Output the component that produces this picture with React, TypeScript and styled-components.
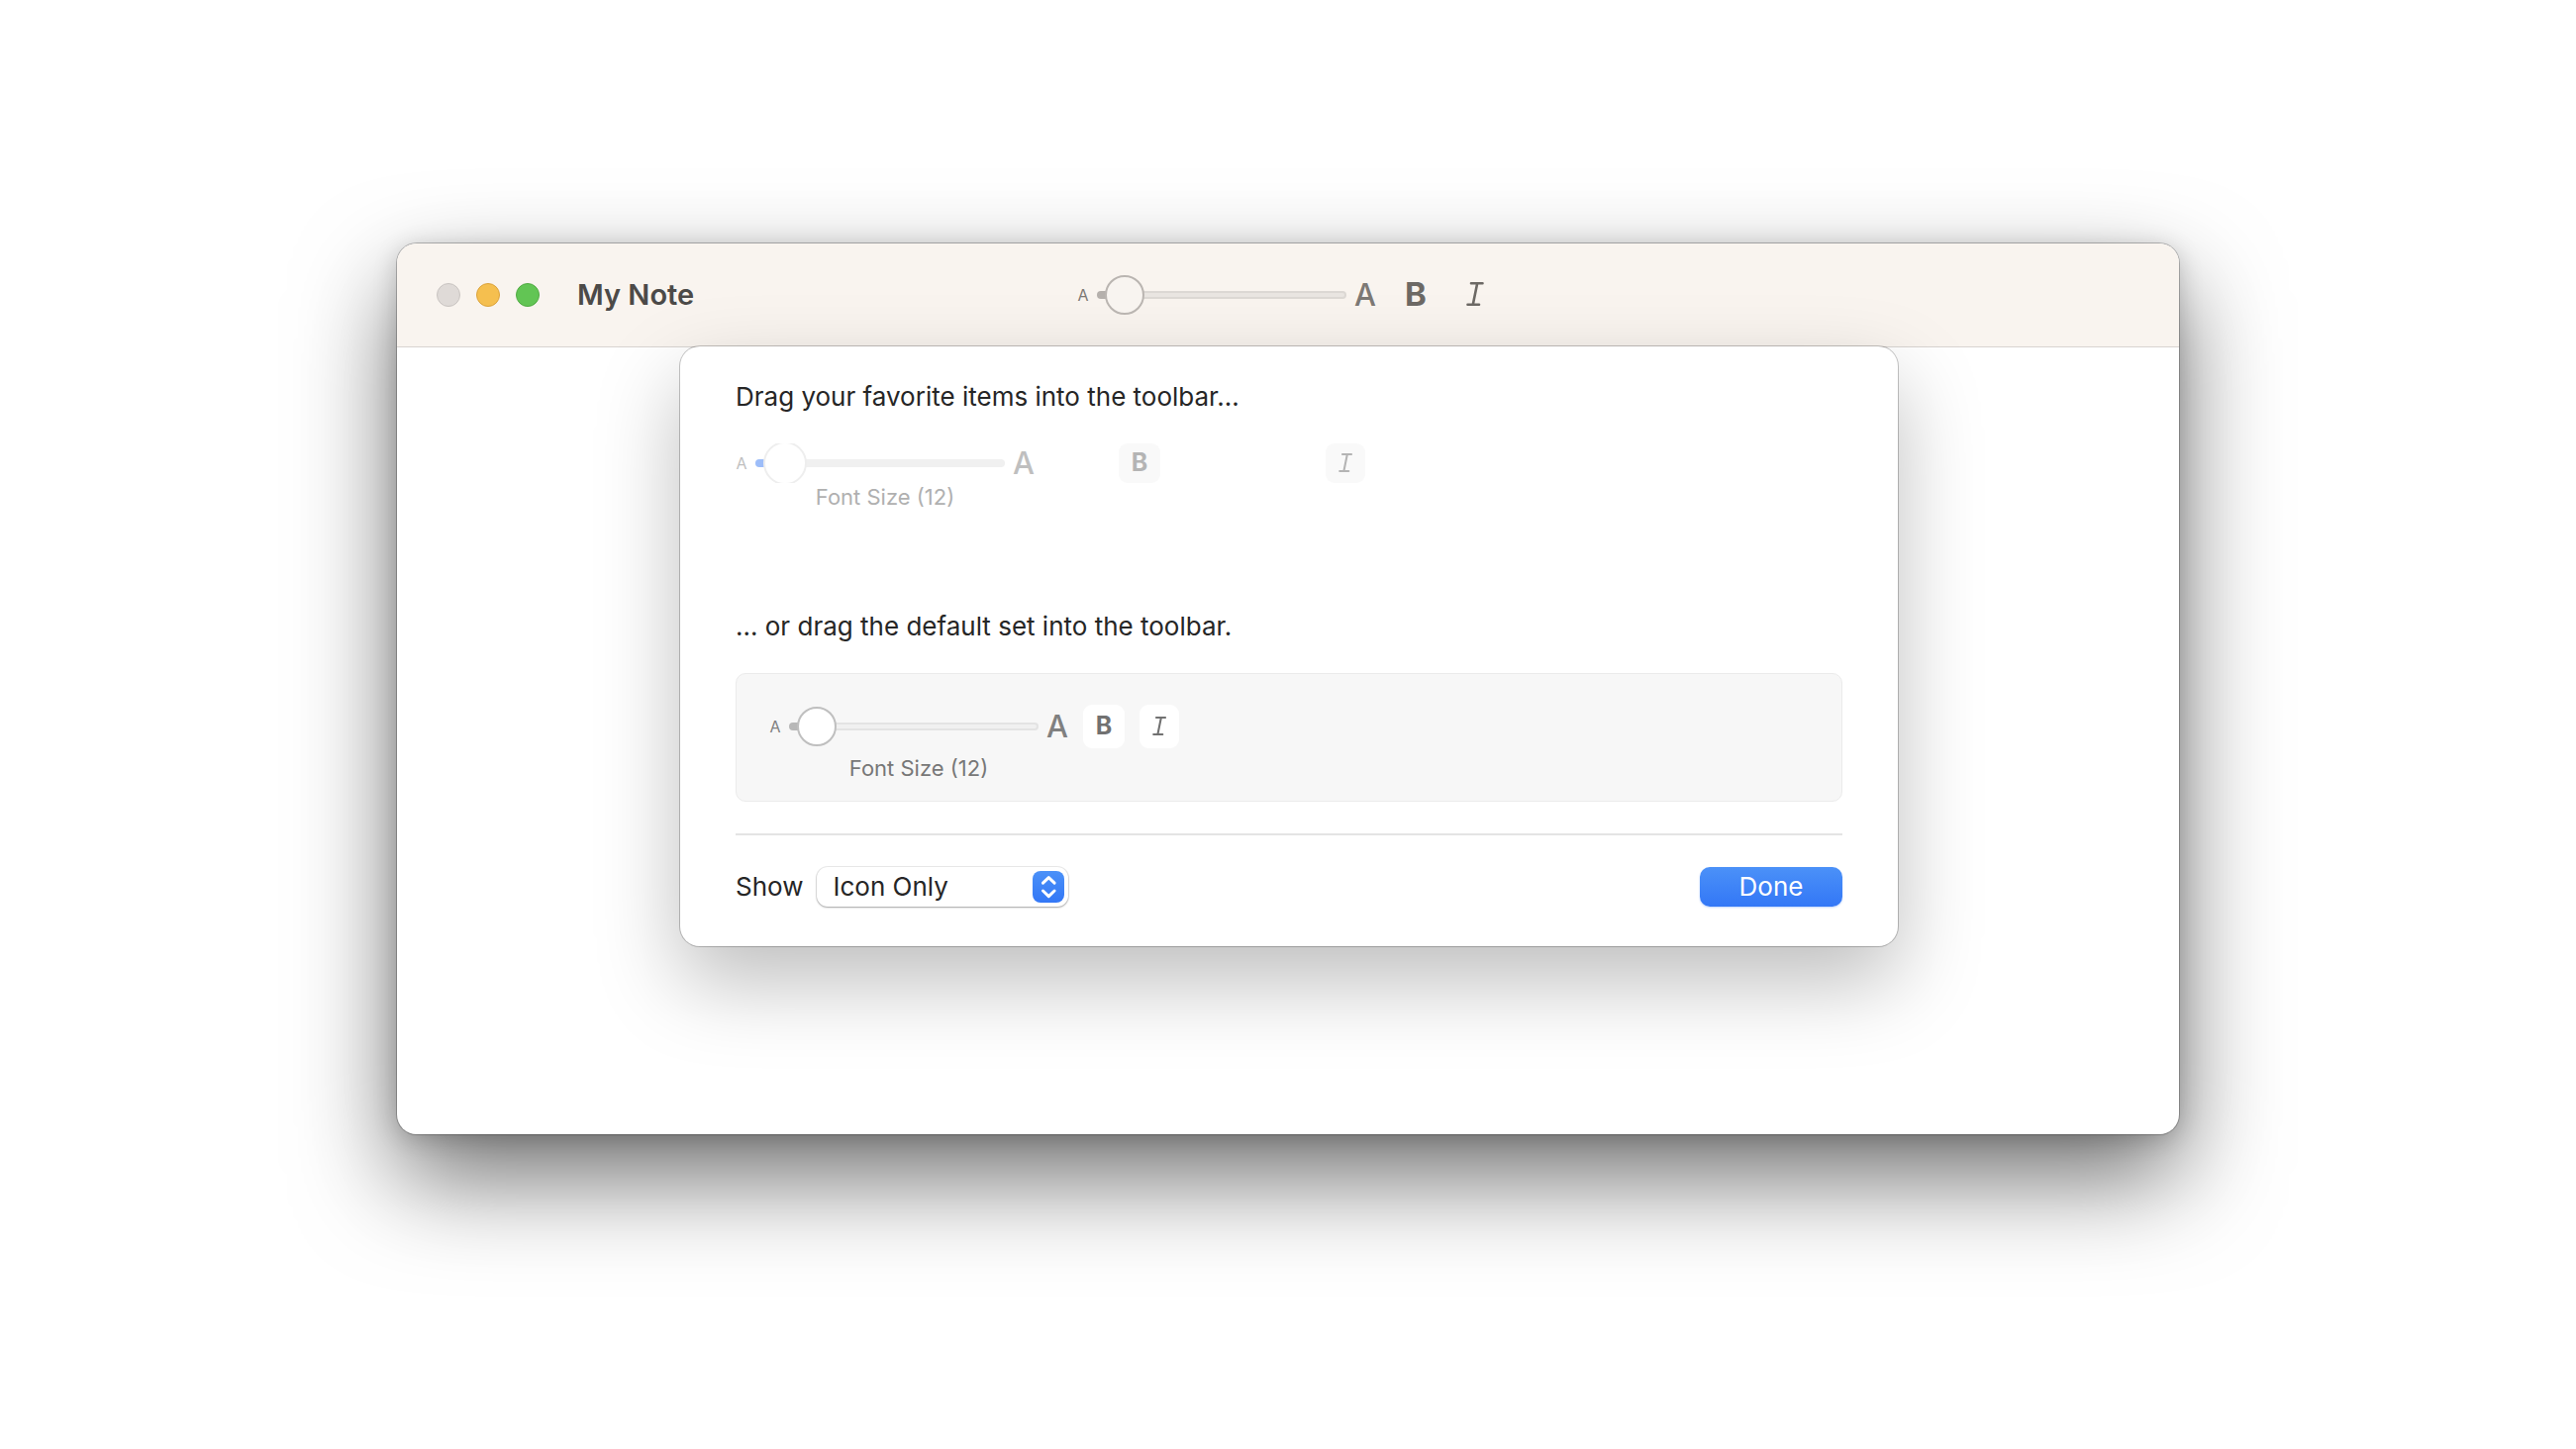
import React, { useId, useState } from "react";
import styled, { createGlobalStyle, css } from "styled-components";

const sans = `Inter, "Liberation Sans", Arial, sans-serif`;

const GlobalStyle = createGlobalStyle`
  *, *::before, *::after { box-sizing: border-box; }
  body { margin: 0; background: #ffffff; font-family: ${sans}; }
  button, select, input { font-family: inherit; }
`;

type Variant = "toolbar" | "palette" | "preset";

const themes: Record<
  Variant,
  { ink: string; label: string; fill: string; track: string; edge: string; thumb: string; ring: string; size: number }
> = {
  toolbar: { ink: "#7d7975", label: "#7d7975", fill: "#b5b0ac", track: "#e9e5e1", edge: "#dcd8d4", thumb: "#f8f4f0", ring: "#bab5b1", size: 40 },
  palette: { ink: "#bfbfbf", label: "#b0b0b0", fill: "#9dbdf9", track: "#f0f0f0", edge: "#f0f0f0", thumb: "#ffffff", ring: "#eeeeee", size: 44 },
  preset: { ink: "#808080", label: "#777777", fill: "#b8b8b8", track: "#f0f0f0", edge: "#e3e3e3", thumb: "#ffffff", ring: "#bfbfbf", size: 40 },
};

const Desktop = styled.main`
  min-height: 100vh;
  padding: 246px 48px;
`;

const AppWindow = styled.section`
  display: flex;
  flex-direction: column;
  max-width: 1800px;
  min-height: 900px;
  margin: 0 auto;
  border-radius: 20px;
  background: #ffffff;
  box-shadow:
    0 0 0 1px rgba(0, 0, 0, 0.24),
    0 4px 24px rgba(0, 0, 0, 0.18),
    0 44px 100px rgba(0, 0, 0, 0.56);
`;

const TitleBar = styled.header`
  display: grid;
  grid-template-columns: 1fr auto 1fr;
  align-items: center;
  height: 105px;
  padding: 0 36px 0 40px;
  border-bottom: 1px solid #d8d4d1;
  border-radius: 20px 20px 0 0;
  background: #f9f4ef;
`;

const TitleGroup = styled.div`
  display: flex;
  align-items: center;
  gap: 38px;
`;

const Lights = styled.div`
  display: flex;
  gap: 16px;
`;

const Light = styled.button<{ $fill: string; $edge: string }>`
  width: 24px;
  height: 24px;
  padding: 0;
  border: 1px solid ${(p) => p.$edge};
  border-radius: 50%;
  background: ${(p) => p.$fill};
`;

const Title = styled.h1`
  margin: 0;
  color: #4c4a48;
  font-size: 29px;
  font-weight: 600;
  line-height: 36px;
`;

const SliderBox = styled.div`
  display: grid;
  grid-template-columns: 12px 252px 22px;
  column-gap: 8px;
  align-items: center;
  justify-items: center;
`;

const Tools = styled.div`
  display: flex;
  align-items: center;
  gap: 4px;

  ${SliderBox} {
    margin-right: 8px;
  }
`;

const SizeMark = styled.span<{ $large?: boolean; $color: string }>`
  color: ${(p) => p.$color};
  font-size: ${(p) => (p.$large ? 31 : 16)}px;
  font-weight: ${(p) => (p.$large ? 500 : 400)};
  line-height: 40px;
`;

const trackStyle = css<{ $variant: Variant }>`
  height: 8px;
  border: 2px solid transparent;
  border-radius: 4px;
  background:
    linear-gradient(
      to right,
      ${(p) => themes[p.$variant].fill} var(--filled),
      transparent var(--filled)
    ) border-box,
    linear-gradient(${(p) => themes[p.$variant].track}, ${(p) => themes[p.$variant].track}) padding-box,
    linear-gradient(${(p) => themes[p.$variant].edge}, ${(p) => themes[p.$variant].edge}) border-box;
`;

const Range = styled.input<{ $variant: Variant }>`
  appearance: none;
  width: 100%;
  height: 40px;
  margin: 0;
  background: none;
  clip-path: inset(0);

  &::-webkit-slider-runnable-track {
    ${trackStyle}
  }

  &::-webkit-slider-thumb {
    appearance: none;
    width: ${(p) => themes[p.$variant].size}px;
    height: ${(p) => themes[p.$variant].size}px;
    margin-top: ${(p) => (4 - themes[p.$variant].size) / 2}px;
    border: 2px solid ${(p) => themes[p.$variant].ring};
    border-radius: 50%;
    background: ${(p) => themes[p.$variant].thumb};
  }
`;

const Caption = styled.label<{ $variant: Variant }>`
  grid-column: 1 / -1;
  margin-top: ${(p) => (p.$variant === "preset" ? 8 : 0)}px;
  color: ${(p) => themes[p.$variant].label};
  font-size: 22px;
  line-height: 28px;
`;

const ToolButton = styled.button<{ $variant: Variant; $narrow?: boolean }>`
  display: grid;
  place-items: center;
  width: ${(p) => (p.$variant === "toolbar" ? 56 : p.$narrow ? 40 : 42)}px;
  height: ${(p) => (p.$variant === "preset" ? 44 : 40)}px;
  padding: 0 0 2px;
  border: 0;
  border-radius: 9px;
  background: ${(p) => ({ toolbar: "none", palette: "#f9f9f9", preset: "#ffffff" })[p.$variant]};
  color: ${(p) => ({ toolbar: "#6d6965", palette: "#b4b4b4", preset: "#717171" })[p.$variant]};
  font-size: ${(p) => (p.$variant === "toolbar" ? 33 : 25)}px;
  font-weight: 700;
  line-height: 36px;

  svg {
    display: block;
    height: ${(p) => (p.$variant === "toolbar" ? 24 : 19)}px;
    overflow: visible;
  }
`;

const SheetArea = styled.div`
  flex: 1;
  padding: 0 0 40px 2px;
`;

const Sheet = styled.form`
  max-width: 1230px;
  margin: -1px auto 0;
  padding: 35px 56px 40px;
  border-radius: 20px;
  background: #ffffff;
  box-shadow: 0 0 0 1px rgba(0, 0, 0, 0.22), 0 36px 84px rgba(0, 0, 0, 0.26);
`;

const Heading = styled.h2`
  margin: 0;
  color: #262626;
  font-size: 26px;
  font-weight: 400;
  line-height: 32px;
`;

const Palette = styled.div`
  display: grid;
  grid-template-columns: 304px 208px 208px;
  justify-items: center;
  align-items: start;
  margin: 31px 0 101px;

  ${SliderBox} {
    justify-self: start;
  }
`;

const Preset = styled.div`
  display: flex;
  align-items: flex-start;
  gap: 15px;
  margin: 31px 0 32px;
  padding: 31px 33px 19px;
  border: 1px solid #ebebeb;
  border-radius: 10px;
  background: #f7f7f7;

  ${SliderBox} {
    padding-top: 2px;
  }
`;

const Footer = styled.footer`
  display: flex;
  align-items: center;
  padding-top: 32px;
  border-top: 2px solid #e4e4e4;
`;

const ShowLabel = styled.label`
  margin-right: 14px;
  color: #262626;
  font-size: 26px;
  line-height: 40px;
`;

const Picker = styled.div`
  display: grid;
  width: 254px;
  align-items: center;

  > * {
    grid-area: 1 / 1;
  }
`;

const Select = styled.select`
  appearance: none;
  height: 40px;
  padding: 0 48px 2px 16px;
  border: 0;
  border-radius: 11px;
  background: #ffffff;
  box-shadow: 0 0 0 1px rgba(0, 0, 0, 0.08), 0 1px 2px rgba(0, 0, 0, 0.3);
  color: #262626;
  font-size: 26px;
`;

const Stepper = styled.span`
  display: grid;
  place-items: center;
  justify-self: end;
  width: 32px;
  height: 32px;
  margin-right: 4px;
  border-radius: 8px;
  background: linear-gradient(#4b91f8, #3377f6);
  pointer-events: none;
`;

const DoneButton = styled.button`
  width: 144px;
  height: 40px;
  margin-left: auto;
  padding: 0;
  border: 0;
  border-radius: 10px;
  background: linear-gradient(#4b91f8, #3377f6);
  box-shadow: 0 1px 2px rgba(51, 119, 246, 0.3);
  color: #ffffff;
  font-size: 26px;
  line-height: 38px;
`;

const ItalicIcon = () => (
  <svg viewBox="0 0 18 24" fill="none" stroke="currentColor" strokeWidth="2.6" strokeLinecap="round" aria-hidden="true">
    <path d="M5 1.3h11.5M1.5 22.7H13M11.2 1.3 6.8 22.7" />
  </svg>
);

const StepperIcon = () => (
  <svg width="32" height="32" fill="none" stroke="#fff" strokeWidth="3" strokeLinecap="round" strokeLinejoin="round" aria-hidden="true">
    <path d="m10.5 12.2 5.8-5.6 5.8 5.6M10.5 20l5.8 5.6 5.8-5.6" />
  </svg>
);

const MIN = 10;
const MAX = 80;

interface FontSliderProps {
  variant: Variant;
  value: number;
  onChange: (value: number) => void;
}

function FontSlider({ variant, value, onChange }: FontSliderProps) {
  const id = useId();
  const { ink } = themes[variant];
  const filled = { "--filled": `${6 + ((value - MIN) / (MAX - MIN)) * 88}%` } as React.CSSProperties;
  return (
    <SliderBox>
      <SizeMark $color={ink}>A</SizeMark>
      <Range
        id={id}
        type="range"
        aria-label="Font Size"
        min={MIN}
        max={MAX}
        value={value}
        onChange={(e) => onChange(Number(e.target.value))}
        $variant={variant}
        style={filled}
      />
      <SizeMark $large $color={ink}>A</SizeMark>
      {variant !== "toolbar" && (
        <Caption htmlFor={id} $variant={variant}>{`Font Size (${value})`}</Caption>
      )}
    </SliderBox>
  );
}

function StyleButtons({ variant }: { variant: Variant }) {
  return (
    <>
      <ToolButton type="button" aria-label="Bold" $variant={variant}>B</ToolButton>
      <ToolButton type="button" aria-label="Italic" $variant={variant} $narrow>
        <ItalicIcon />
      </ToolButton>
    </>
  );
}

export default function App() {
  const [size, setSize] = useState(12);
  return (
    <>
      <GlobalStyle />
      <Desktop>
        <AppWindow>
          <TitleBar>
            <TitleGroup>
              <Lights>
                <Light aria-label="Close" $fill="#dfdad7" $edge="#c9c4c1" />
                <Light aria-label="Minimize" $fill="#f5bf4f" $edge="#dba33c" />
                <Light aria-label="Zoom" $fill="#62c554" $edge="#51ab43" />
              </Lights>
              <Title>My Note</Title>
            </TitleGroup>
            <Tools>
              <FontSlider variant="toolbar" value={size} onChange={setSize} />
              <StyleButtons variant="toolbar" />
            </Tools>
          </TitleBar>
          <SheetArea>
            <Sheet onSubmit={(e) => e.preventDefault()}>
              <Heading>Drag your favorite items into the toolbar…</Heading>
              <Palette>
                <FontSlider variant="palette" value={size} onChange={setSize} />
                <StyleButtons variant="palette" />
              </Palette>
              <Heading>… or drag the default set into the toolbar.</Heading>
              <Preset>
                <FontSlider variant="preset" value={size} onChange={setSize} />
                <StyleButtons variant="preset" />
              </Preset>
              <Footer>
                <ShowLabel htmlFor="show">Show</ShowLabel>
                <Picker>
                  <Select id="show" defaultValue="icon">
                    <option value="both">Icon and Text</option>
                    <option value="icon">Icon Only</option>
                    <option value="text">Text Only</option>
                  </Select>
                  <Stepper>
                    <StepperIcon />
                  </Stepper>
                </Picker>
                <DoneButton type="submit">Done</DoneButton>
              </Footer>
            </Sheet>
          </SheetArea>
        </AppWindow>
      </Desktop>
    </>
  );
}
